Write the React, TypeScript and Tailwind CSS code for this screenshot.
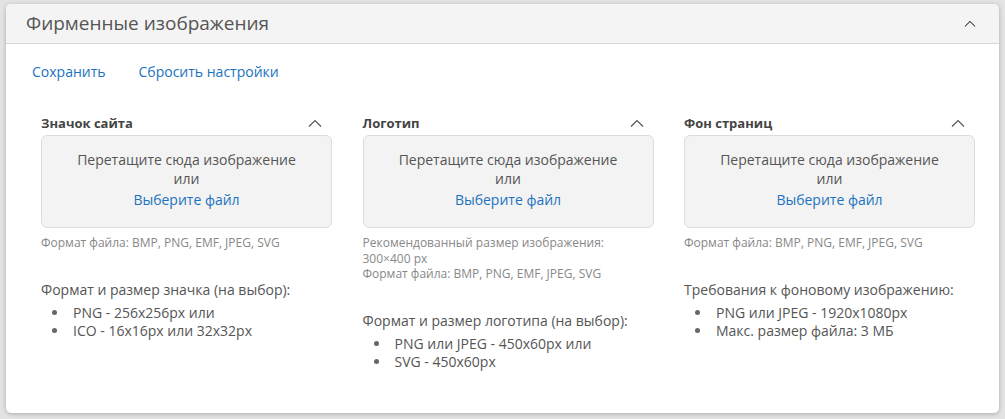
const font = { fontFamily: '"Open Sans", "Noto Sans", sans-serif' };

function Chevron({ className }: { className: string }) {
  return (
    <svg className={className} viewBox="0 0 14 8" fill="none">
      <path d="M1 7.5 7 1.5l6 6" stroke="currentColor" strokeWidth="1.2" />
    </svg>
  );
}

interface ColumnProps {
  title: string;
  hints: string[];
  heading: string;
  items: string[];
}

function Column({ title, hints, heading, items }: ColumnProps) {
  return (
    <div className="w-[291px]">
      <div className="flex h-[18px] items-center justify-between pr-[10px]">
        <span className="text-[13px] font-bold text-[#444]">{title}</span>
        <Chevron className="mb-[3px] h-[8px] w-[14px] text-[#555]" />
      </div>
      <div className="mt-[2px] flex h-[93px] flex-col items-center rounded-[6px] border border-[#dcdcdc] bg-[#f3f3f3] pt-[14px] text-[14px] leading-[19px] text-[#555]">
        <span>Перетащите сюда изображение</span>
        <span>или</span>
        <span className="mt-[2px] text-[#1b72c0]">Выберите файл</span>
      </div>
      <div className="mt-[7px] text-[12px] leading-[15.5px] text-[#888]">
        {hints.map((h) => (
          <div key={h}>{h}</div>
        ))}
      </div>
      <div className="mt-[29px] text-[14px] leading-[20px] text-[#555]">{heading}</div>
      <ul className="mt-[4px] text-[14px] leading-[18px] text-[#555]">
        {items.map((it) => (
          <li key={it} className="flex items-center">
            <span className="ml-[11px] mr-[16px] h-[5px] w-[5px] rounded-full bg-[#666]" />
            {it}
          </li>
        ))}
      </ul>
    </div>
  );
}

export default function App() {
  return (
    <div className="h-[419px] w-[1005px] bg-[#e3e3e3] pl-[6px] pt-[4px]" style={font}>
      <div className="h-[409px] w-[993px] overflow-hidden rounded-[5px] bg-white shadow-[0_1px_4px_rgba(0,0,0,0.25)]">
        <div className="flex h-[40px] items-center justify-between border-b border-[#d6d6d6] bg-[#f4f4f4] pl-[20px] pr-[23px]">
          <span className="text-[19px] text-[#555]">Фирменные изображения</span>
          <Chevron className="h-[7px] w-[12px] text-[#333]" />
        </div>
        <div className="flex gap-[33px] pl-[26px] pt-[18px] text-[14px] leading-[20px] text-[#1b72c0]">
          <span>Сохранить</span>
          <span>Сбросить настройки</span>
        </div>
        <div className="mt-[33px] flex gap-[30.5px] pl-[35px]">
          <Column
            title="Значок сайта"
            hints={['Формат файла: BMP, PNG, EMF, JPEG, SVG']}
            heading="Формат и размер значка (на выбор):"
            items={['PNG - 256x256px или', 'ICO - 16x16px или 32x32px']}
          />
          <Column
            title="Логотип"
            hints={['Рекомендованный размер изображения:', '300×400 px', 'Формат файла: BMP, PNG, EMF, JPEG, SVG']}
            heading="Формат и размер логотипа (на выбор):"
            items={['PNG или JPEG - 450x60px или', 'SVG - 450x60px']}
          />
          <Column
            title="Фон страниц"
            hints={['Формат файла: BMP, PNG, EMF, JPEG, SVG']}
            heading="Требования к фоновому изображению:"
            items={['PNG или JPEG - 1920x1080px', 'Макс. размер файла: 3 МБ']}
          />
        </div>
      </div>
    </div>
  );
}
